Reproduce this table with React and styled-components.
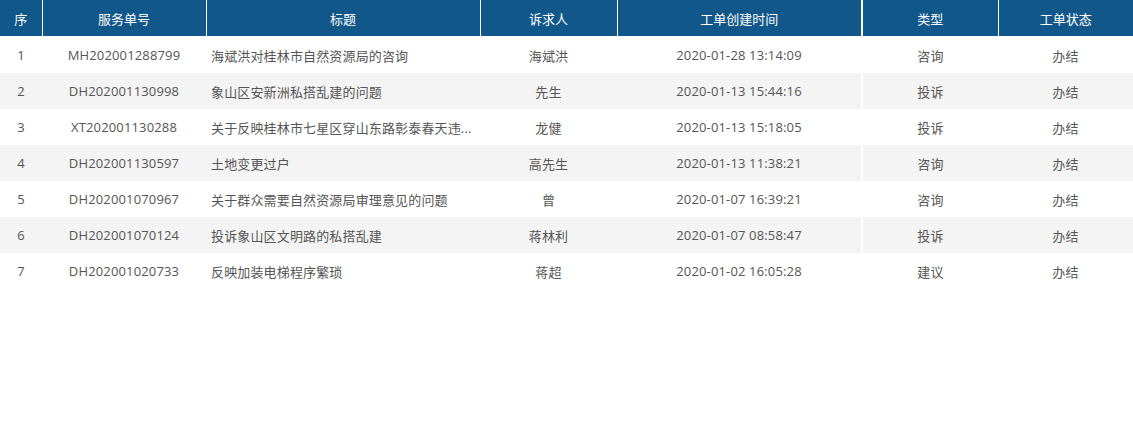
import React from 'react';
import styled, { createGlobalStyle } from 'styled-components';

const GlobalStyle = createGlobalStyle`
  html, body {
    margin: 0;
    padding: 0;
    background: #fff;
  }
  body {
    font-family: 'Open Sans', 'Noto Sans CJK SC', sans-serif;
  }
`;

const columns = [
  { title: '序', width: 42 },
  { title: '服务单号', width: 164 },
  { title: '标题', width: 274, align: 'left' },
  { title: '诉求人', width: 137 },
  { title: '工单创建时间', width: 245 },
  { title: '类型', width: 136, thick: true },
  { title: '工单状态', width: 135 },
];

const rows = [
  ['1', 'MH202001288799', '海斌洪对桂林市自然资源局的咨询', '海斌洪', '2020-01-28 13:14:09', '咨询', '办结'],
  ['2', 'DH202001130998', '象山区安新洲私搭乱建的问题', '先生', '2020-01-13 15:44:16', '投诉', '办结'],
  ['3', 'XT202001130288', '关于反映桂林市七星区穿山东路彰泰春天违...', '龙健', '2020-01-13 15:18:05', '投诉', '办结'],
  ['4', 'DH202001130597', '土地变更过户', '高先生', '2020-01-13 11:38:21', '咨询', '办结'],
  ['5', 'DH202001070967', '关于群众需要自然资源局审理意见的问题', '曾', '2020-01-07 16:39:21', '咨询', '办结'],
  ['6', 'DH202001070124', '投诉象山区文明路的私搭乱建', '蒋林利', '2020-01-07 08:58:47', '投诉', '办结'],
  ['7', 'DH202001020733', '反映加装电梯程序繁琐', '蒋超', '2020-01-02 16:05:28', '建议', '办结'],
];

const App = () => {
  return (
    <>
      <GlobalStyle />
      <Table>
        <colgroup>
          {columns.map((c, i) => (
            <col key={i} style={{ width: c.width }} />
          ))}
        </colgroup>
        <thead>
          <tr>
            {columns.map((c, i) => (
              <HeadCell key={i} $first={i === 0} $thick={c.thick}>
                {c.title}
              </HeadCell>
            ))}
          </tr>
        </thead>
        <tbody>
          {rows.map((r, ri) => (
            <Row key={ri} $striped={ri % 2 === 1}>
              {r.map((v, ci) => (
                <Cell
                  key={ci}
                  $align={columns[ci].align}
                  $thick={columns[ci].thick}
                >
                  {v}
                </Cell>
              ))}
            </Row>
          ))}
        </tbody>
      </Table>
    </>
  );
};

const Table = styled.table`
  width: 1133px;
  table-layout: fixed;
  border-collapse: collapse;
  border-spacing: 0;
  font-size: 13px;
`;

const HeadCell = styled.th`
  height: 36px;
  padding: 0;
  background: #11578a;
  color: #fff;
  font-weight: normal;
  font-family: 'Noto Sans CJK SC', sans-serif;
  text-align: center;
  border-bottom: 1px solid #fff;
  border-left: ${(p) => (p.$first ? 'none' : p.$thick ? '2px solid #fff' : '1px solid #fff')};
`;

const Row = styled.tr`
  background: ${(p) => (p.$striped ? '#f4f4f4' : '#fff')};
`;

const Cell = styled.td`
  height: 36px;
  padding: 0 ${(p) => (p.$align === 'left' ? '5px' : '0')};
  color: #555;
  letter-spacing: 0.15px;
  text-align: ${(p) => p.$align || 'center'};
  white-space: nowrap;
  overflow: hidden;
  text-overflow: ellipsis;
  border-left: ${(p) => (p.$thick ? '2px solid #fff' : 'none')};
`;

export default App;
